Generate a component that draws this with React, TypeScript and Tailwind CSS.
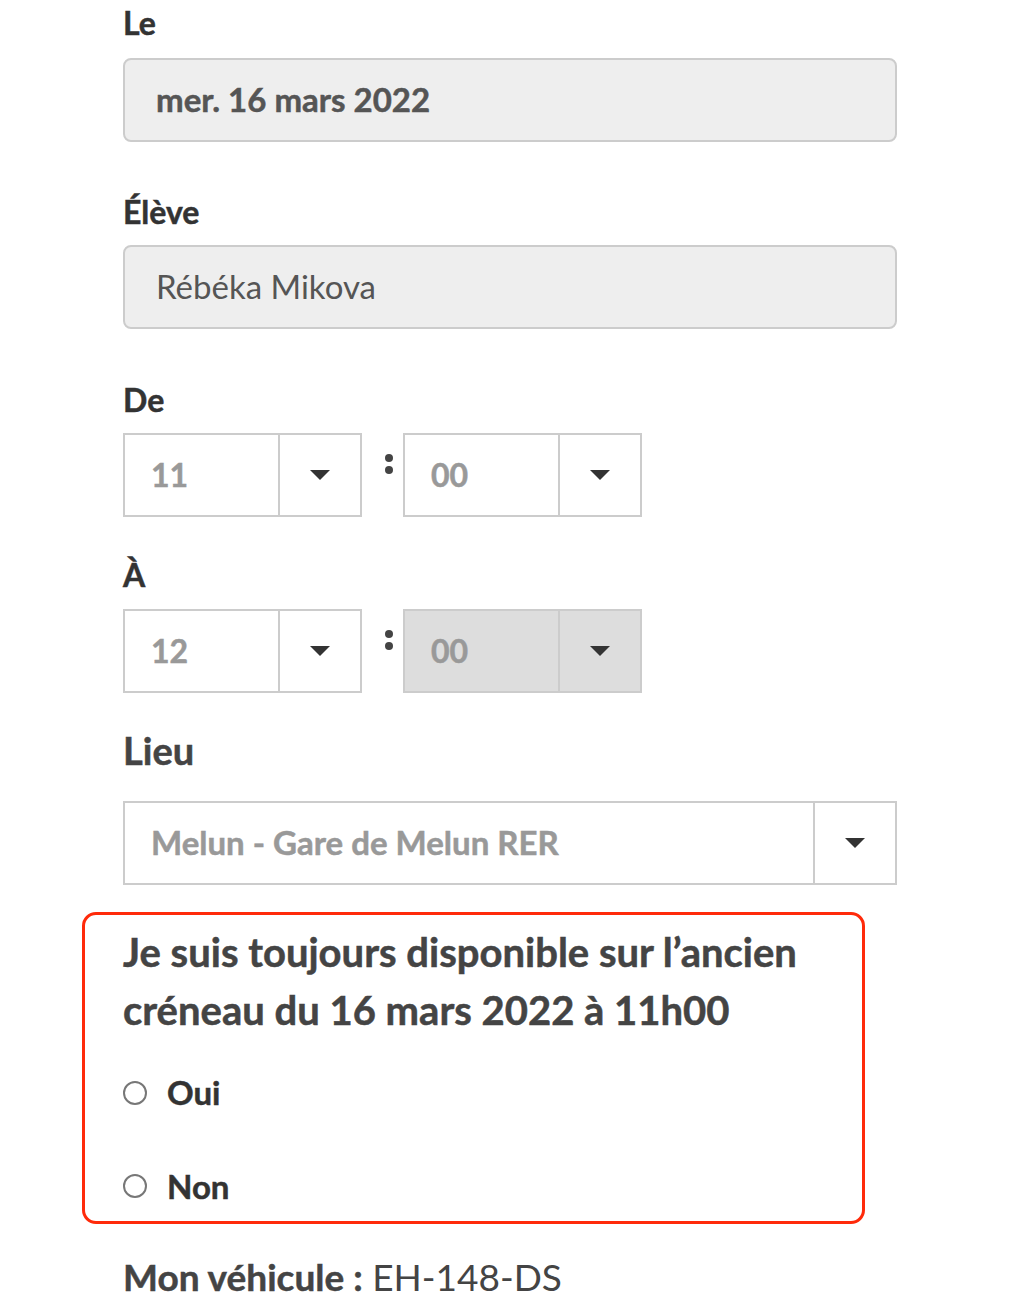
const font = { fontFamily: "Lato, 'Noto Sans', sans-serif" };

function Caret() {
  return (
    <svg width="20" height="10" viewBox="0 0 20 10" className="block">
      <path d="M0 0 L20 0 L10 10 Z" fill="#333333" />
    </svg>
  );
}

function TimeSelect({ value, disabled }: { value: string; disabled?: boolean }) {
  return (
    <div
      className={`flex h-[84px] w-[239px] border-2 border-[#cccccc] ${
        disabled ? "bg-[#dddddd]" : "bg-white"
      }`}
    >
      <div className="flex flex-1 items-center pl-[26px] text-[32px] font-bold text-[#999999] [-webkit-text-stroke:0.5px_#999999]">
        {value}
      </div>
      <div className="flex w-[82px] items-center justify-center border-l-2 border-[#cccccc]">
        <Caret />
      </div>
    </div>
  );
}

function TimeRow({ h, m, disabledMinutes }: { h: string; m: string; disabledMinutes?: boolean }) {
  return (
    <div className="flex items-start">
      <TimeSelect value={h} />
      <div className="flex w-[41px] flex-col pl-[23px] pt-[21px]">
        <span className="block h-[8px] w-[8px] rounded-full bg-[#444444]" />
        <span className="mt-[4px] block h-[8px] w-[8px] rounded-full bg-[#444444]" />
      </div>
      <TimeSelect value={m} disabled={disabledMinutes} />
    </div>
  );
}

function Radio({ label }: { label: string }) {
  return (
    <label className="flex items-center gap-[20px]">
      <span className="block h-[24px] w-[24px] rounded-full border-2 border-[#777777] bg-white" />
      <span className="text-[33px] font-bold text-[#333333] [-webkit-text-stroke:0.5px_#333333]">{label}</span>
    </label>
  );
}

const label = "h-[40px] text-[32px] font-bold leading-[40px] text-[#333333] [-webkit-text-stroke:0.5px_#333333]";

export default function App() {
  return (
    <div className="min-h-[1312px] bg-white" style={font}>
      <div className="w-[897px] pl-[123px]">
        <div className="h-[40px] text-[32px] font-bold leading-[46px] text-[#333333] [-webkit-text-stroke:0.5px_#333333]">Le</div>
        <div className="mt-[18px] flex h-[84px] items-center rounded-[8px] border-2 border-[#cccccc] bg-[#eeeeee] pl-[31px] text-[33px] font-bold text-[#555555] [-webkit-text-stroke:0.5px_#555555]">
          mer. 16 mars 2022
        </div>

        <div className={`mt-[50px] ${label}`}>Élève</div>
        <div className="mt-[13px] flex h-[84px] items-center rounded-[8px] border-2 border-[#cccccc] bg-[#eeeeee] pl-[31px] text-[33px] text-[#555555]">
          Rébéka Mikova
        </div>

        <div className={`mt-[51px] ${label}`}>De</div>
        <div className="mt-[13px]">
          <TimeRow h="11" m="00" />
        </div>

        <div className={`mt-[38px] ${label}`}>À</div>
        <div className="mt-[14px]">
          <TimeRow h="12" m="00" disabledMinutes />
        </div>

        <div className="mt-[34px] h-[46px] text-[38px] font-bold leading-[46px] text-[#444444] [-webkit-text-stroke:0.5px_#444444]">Lieu</div>
        <div className="mt-[28px] flex h-[84px] border-2 border-[#cccccc] bg-white">
          <div className="flex flex-1 items-center pl-[26px] text-[33px] font-bold text-[#999999] [-webkit-text-stroke:0.5px_#999999]">
            Melun - Gare de Melun RER
          </div>
          <div className="flex w-[82px] items-center justify-center border-l-2 border-[#cccccc]">
            <Caret />
          </div>
        </div>

        <div className="ml-[-41px] mt-[27px] w-[783px] rounded-[14px] border-[3px] border-[#ff2a0a] pb-[10px] pl-[38px] pr-[20px] pt-[8px]">
          <div className="text-[40px] font-bold leading-[58px] text-[#444444] [-webkit-text-stroke:0.5px_#444444]">
            Je suis toujours disponible sur l’ancien créneau du 16 mars 2022 à 11h00
          </div>
          <div className="mt-[29px] flex flex-col gap-[44px]">
            <Radio label="Oui" />
            <Radio label="Non" />
          </div>
        </div>

        <div className="mt-[30px] text-[37px] leading-[46px] text-[#444444]">
          <span className="font-bold [-webkit-text-stroke:0.5px_#444444]">Mon véhicule :</span> EH-148-DS
        </div>
      </div>
    </div>
  );
}
